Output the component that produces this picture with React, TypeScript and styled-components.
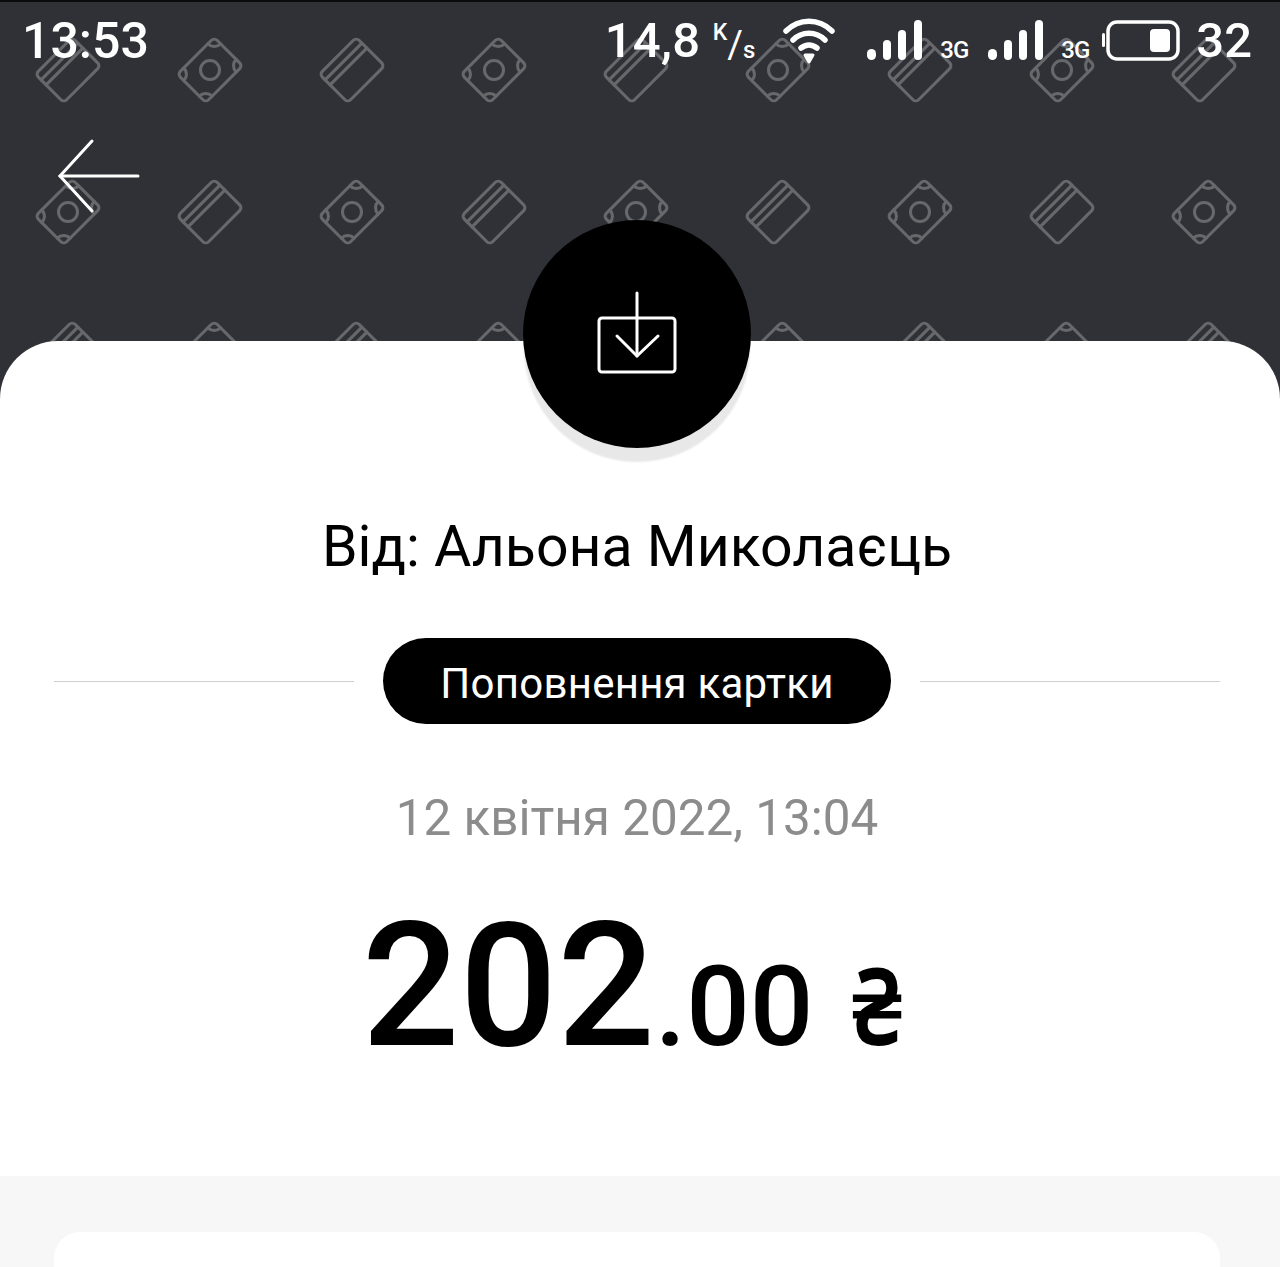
import React from "react";
import styled, { createGlobalStyle } from "styled-components";

const GlobalStyle = createGlobalStyle`
  html, body {
    margin: 0;
    padding: 0;
    background: #fff;
    font-family: Roboto, "Noto Sans", sans-serif;
  }
`;

const Screen = styled.div`
  width: 1280px;
  height: 1267px;
  display: flex;
  flex-direction: column;
  overflow: hidden;
  background: #f7f7f7;
`;

const Header = styled.header`
  position: relative;
  height: 401px;
  margin-bottom: -60px;
  box-sizing: border-box;
  background: #303137;
  border-top: 2px solid #0c0c0e;
`;

const PatternLayer = styled.svg`
  position: absolute;
  top: -2px;
  left: 0;
`;

const StatusBar = styled.div`
  position: relative;
  display: flex;
  justify-content: space-between;
  align-items: center;
  height: 77px;
  padding: 0 28px 0 22px;
  color: #fff;
`;

const Clock = styled.span`
  font-size: 50px;
  font-weight: 500;
`;

const Indicators = styled.div`
  display: flex;
  align-items: center;
`;

const Speed = styled.span`
  margin-right: 28px;
  font-size: 49px;
  font-weight: 500;
  letter-spacing: 0.25px;
`;

const UnitPart = styled.span<{ $size: number; $raise: number }>`
  font-size: ${(p) => p.$size}px;
  font-weight: ${(p) => (p.$size > 30 ? 400 : 500)};
  vertical-align: ${(p) => p.$raise}px;
  letter-spacing: 0;
`;

const WifiGap = styled.span`
  width: 30px;
`;

const Network = styled.span<{ $last?: boolean }>`
  margin: 18px ${(p) => (p.$last ? 11 : 18)}px 0 18px;
  width: 30px;
  font-size: 24px;
  font-weight: 500;
  letter-spacing: -1px;
`;

const BatteryLevel = styled.span`
  margin-left: 16px;
  font-size: 49px;
  font-weight: 500;
`;

const BackButton = styled.button`
  position: relative;
  display: block;
  margin: 59px 0 0 56px;
  padding: 0;
  width: 86px;
  height: 76px;
  border: 0;
  background: none;
`;

const Sheet = styled.main`
  position: relative;
  height: 835px;
  display: flex;
  flex-direction: column;
  align-items: center;
  background: #fff;
  border-radius: 58px 58px 0 0;
`;

const Badge = styled.div`
  width: 228px;
  height: 228px;
  margin-top: -121px;
  margin-left: -6px;
  flex: none;
  display: flex;
  align-items: center;
  justify-content: center;
  border-radius: 50%;
  background: #000;
  box-shadow: 0 15px 2px -1px #e8e8e8;
`;

const Sender = styled.h1`
  margin: 67px 0 0 -6px;
  font-size: 57.2px;
  line-height: 64px;
  font-weight: 400;
  color: #000;
`;

const TypeRow = styled.div`
  align-self: stretch;
  display: flex;
  align-items: center;
  gap: 29px;
  margin-top: 59px;
  padding: 0 60px 0 54px;
`;

const Rule = styled.div`
  flex: 1;
  height: 1px;
  background: #cfcfcf;
`;

const TypeChip = styled.div`
  width: 508px;
  height: 86px;
  box-sizing: border-box;
  padding-top: 4px;
  display: flex;
  align-items: center;
  justify-content: center;
  border-radius: 43px;
  background: #000;
  color: #fff;
  font-size: 42px;
  letter-spacing: 0.25px;
`;

const DateText = styled.div`
  margin: 64px 0 0 -6px;
  font-size: 49.4px;
  line-height: 60px;
  color: #8c8c8c;
`;

const Amount = styled.div`
  margin: 43px 0 0 -7px;
  display: flex;
  align-items: baseline;
  font-weight: 500;
  color: #000;
  line-height: 190px;
`;

const Whole = styled.span`
  font-size: 172px;
`;

const Fraction = styled.span`
  font-size: 112px;
`;

const Currency = styled.span`
  display: inline-block;
  margin-left: 38px;
  font-family: "Noto Sans", sans-serif;
  font-size: 106px;
  font-weight: 600;
  transform: scaleX(0.84);
  transform-origin: left center;
`;

const Details = styled.section`
  flex: 1;
  display: flex;
  padding: 56px 60px 0 54px;
`;

const DetailsCard = styled.div`
  flex: 1;
  background: #fff;
  border-radius: 26px 26px 0 0;
`;

const CardGlyph = () => (
  <g fill="none" stroke="#67686c" strokeWidth="3" strokeLinecap="round" strokeLinejoin="round">
    <rect x="-26" y="-20" width="52" height="40" rx="4" />
    <path d="M-26 -12H26M-26 -5H26" />
  </g>
);

const MoneyGlyph = () => (
  <g fill="none" stroke="#67686c" strokeWidth="3" strokeLinecap="round" strokeLinejoin="round">
    <rect x="-26" y="-20" width="52" height="40" rx="4" />
    <circle r="9.5" />
    <path d="M-26 -11A9 9 0 0 0 -17 -20M17 -20A9 9 0 0 0 26 -11M26 11A9 9 0 0 0 17 20M-17 20A9 9 0 0 0 -26 11" />
  </g>
);

const Pattern = () => (
  <PatternLayer width="1280" height="400" aria-hidden="true">
    <defs>
      <pattern id="tiles" x="-3" y="-1" width="284" height="284" patternUnits="userSpaceOnUse">
        <g transform="translate(71 71) rotate(-45)"><CardGlyph /></g>
        <g transform="translate(213 71) rotate(-45)"><MoneyGlyph /></g>
        <g transform="translate(71 213) rotate(-45)"><MoneyGlyph /></g>
        <g transform="translate(213 213) rotate(-45)"><CardGlyph /></g>
      </pattern>
    </defs>
    <rect width="1280" height="400" fill="url(#tiles)" />
  </PatternLayer>
);

const WifiIcon = () => (
  <svg width="54" height="48" viewBox="0 0 54 48" fill="none" stroke="#fff" strokeWidth="5.5" strokeLinecap="round">
    <path d="M3 14C16 1 36 1 49 14" />
    <path d="M10 23C19 14 33 14 42 23" />
    <path d="M18 31C23 27 29 27 34 31" />
    <path d="M22 38L26 45L30 38Z" fill="#fff" strokeWidth="3" strokeLinejoin="round" />
  </svg>
);

const SignalIcon = () => (
  <svg width="55" height="42" viewBox="0 0 55 42" fill="#fff">
    <rect x="0" y="29" width="9" height="11" rx="4.5" />
    <rect x="16" y="20" width="8" height="20" rx="4" />
    <rect x="31" y="10" width="8" height="30" rx="4" />
    <rect x="47" y="0" width="8" height="40" rx="4" />
  </svg>
);

const BatteryIcon = () => (
  <svg width="78" height="42" viewBox="0 0 78 42" fill="none">
    <rect x="6" y="2" width="70" height="37" rx="9" stroke="#fff" strokeWidth="3.5" />
    <rect x="0" y="13" width="3" height="14" rx="1.5" fill="#fff" />
    <rect x="48" y="9" width="20" height="23" rx="4" fill="#fff" />
  </svg>
);

const BackArrow = () => (
  <svg width="86" height="76" viewBox="0 0 86 76" fill="none" stroke="#fff" strokeWidth="3" strokeLinecap="round">
    <path d="M4 38H82" />
    <path d="M36 3L4 38L36 73" />
  </svg>
);

const DownloadIcon = () => (
  <svg width="84" height="88" viewBox="0 0 84 88" fill="none" stroke="#fff" strokeWidth="3" strokeLinecap="round" strokeLinejoin="round">
    <rect x="4" y="28" width="76" height="54" rx="3" />
    <path d="M42 3V66" />
    <path d="M22 46L42 66L63 46" />
  </svg>
);

export default function App() {
  return (
    <Screen>
      <GlobalStyle />
      <Header>
        <Pattern />
        <StatusBar>
          <Clock>13:53</Clock>
          <Indicators>
            <Speed>
              14,8{" "}
              <UnitPart $size={23} $raise={17}>K</UnitPart>
              <UnitPart $size={38} $raise={-1}>/</UnitPart>
              <UnitPart $size={24} $raise={-1}>s</UnitPart>
            </Speed>
            <WifiIcon />
            <WifiGap />
            <SignalIcon />
            <Network>3G</Network>
            <SignalIcon />
            <Network $last>3G</Network>
            <BatteryIcon />
            <BatteryLevel>32</BatteryLevel>
          </Indicators>
        </StatusBar>
        <BackButton aria-label="Назад">
          <BackArrow />
        </BackButton>
      </Header>
      <Sheet>
        <Badge>
          <DownloadIcon />
        </Badge>
        <Sender>Від: Альона Миколаєць</Sender>
        <TypeRow>
          <Rule />
          <TypeChip>Поповнення картки</TypeChip>
          <Rule />
        </TypeRow>
        <DateText>12 квітня 2022, 13:04</DateText>
        <Amount>
          <Whole>202</Whole>
          <Fraction>.00</Fraction>
          <Currency>₴</Currency>
        </Amount>
      </Sheet>
      <Details>
        <DetailsCard />
      </Details>
    </Screen>
  );
}
